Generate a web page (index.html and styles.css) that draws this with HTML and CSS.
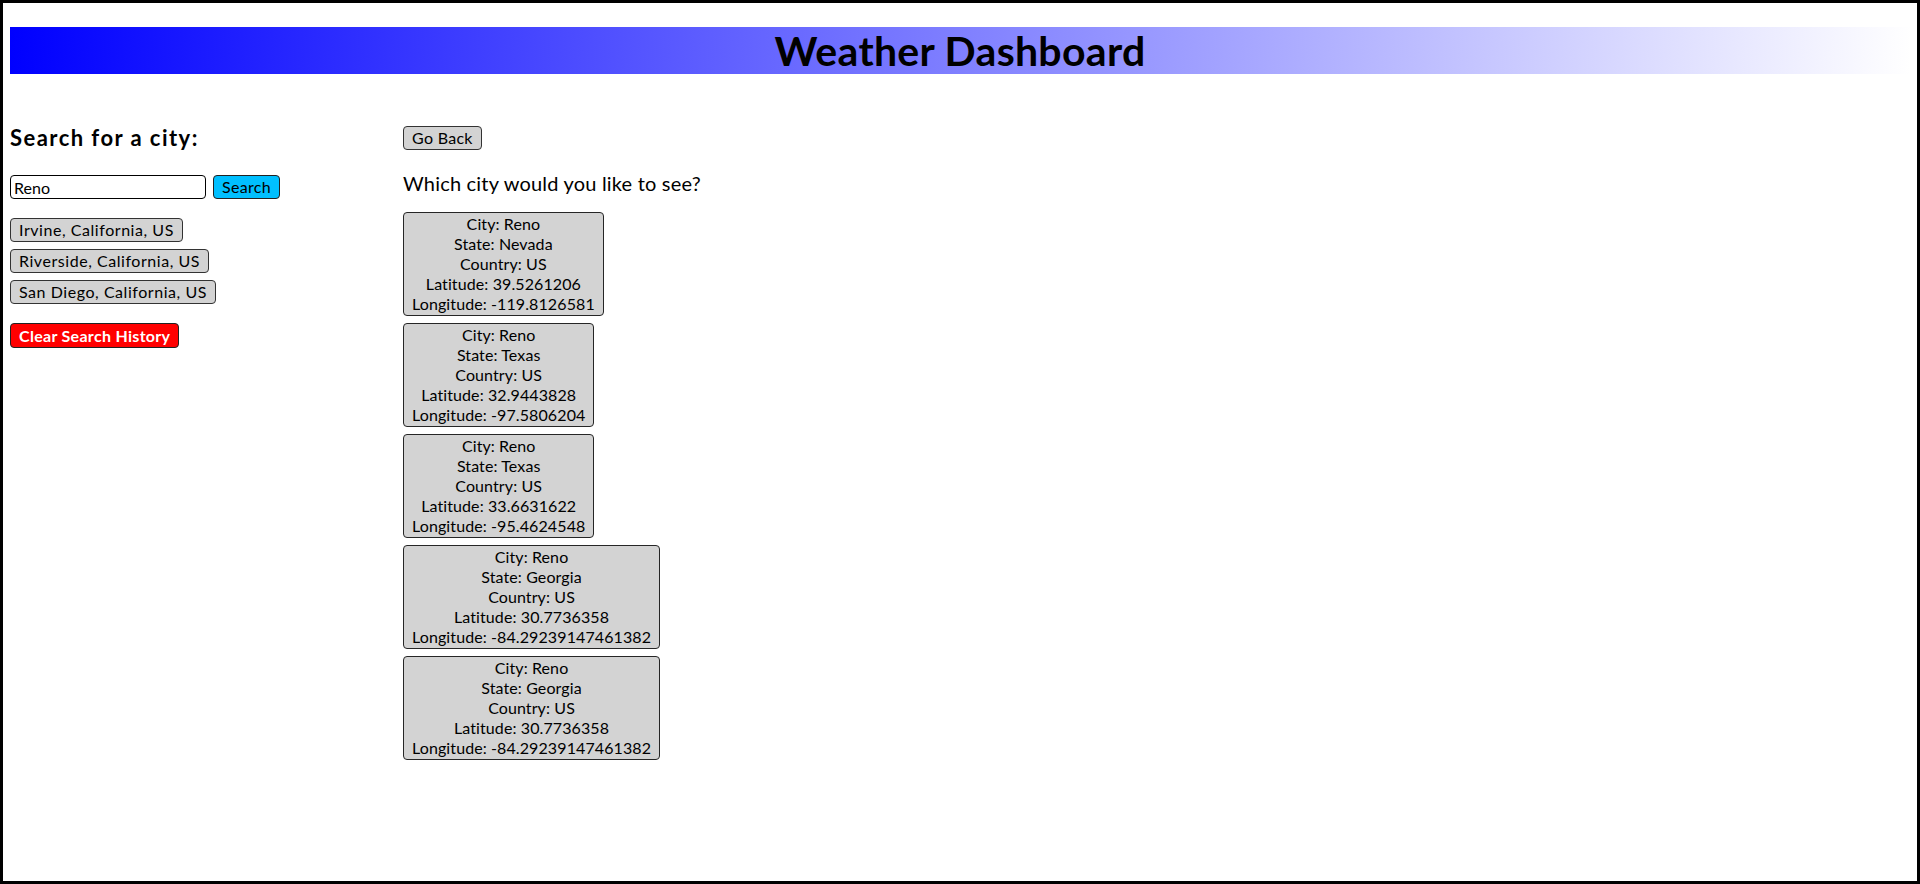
FILE: index.html
```html
<!DOCTYPE html>
<html lang="en">
<head>
<meta charset="utf-8">
<title>Weather Dashboard</title>
<link rel="stylesheet" href="styles.css">
</head>
<body>
<div class="frame">
  <header class="banner">
    <h1 class="banner-title">Weather Dashboard</h1>
  </header>
  <main class="layout">
    <aside class="sidebar">
      <h2 class="sidebar-title">Search for a city:</h2>
      <form class="search" onsubmit="return false">
        <input class="search-input" type="text" value="Reno">
        <button class="btn btn-search" type="button">Search</button>
      </form>
      <div class="history">
        <button class="btn btn-gray btn-history" type="button">Irvine, California, US</button>
        <button class="btn btn-gray btn-history" type="button">Riverside, California, US</button>
        <button class="btn btn-gray btn-history" type="button">San Diego, California, US</button>
      </div>
      <button class="btn btn-clear" type="button">Clear Search History</button>
    </aside>
    <section class="results">
      <button class="btn btn-gray" type="button">Go Back</button>
      <p class="prompt">Which city would you like to see?</p>
      <div class="cards">
        <button class="card" type="button">City: Reno<br>State: Nevada<br>Country: US<br>Latitude: 39.5261206<br>Longitude: -119.8126581</button>
        <button class="card" type="button">City: Reno<br>State: Texas<br>Country: US<br>Latitude: 32.9443828<br>Longitude: -97.5806204</button>
        <button class="card" type="button">City: Reno<br>State: Texas<br>Country: US<br>Latitude: 33.6631622<br>Longitude: -95.4624548</button>
        <button class="card" type="button">City: Reno<br>State: Georgia<br>Country: US<br>Latitude: 30.7736358<br>Longitude: -84.29239147461382</button>
        <button class="card" type="button">City: Reno<br>State: Georgia<br>Country: US<br>Latitude: 30.7736358<br>Longitude: -84.29239147461382</button>
      </div>
    </section>
  </main>
</div>
</body>
</html>
```
FILE: styles.css
```css
* {
  box-sizing: border-box;
}

html, body {
  margin: 0;
  padding: 0;
  background: #ffffff;
}

body {
  font-family: Lato, "Noto Sans", sans-serif;
  color: #000000;
}

.frame {
  height: 884px;
  border: 3px solid #000000;
  padding: 24px 7px 0 7px;
}

.banner {
  height: 47px;
  background: linear-gradient(93deg, #0000ff 0%, #ffffff 100%);
  display: flex;
  align-items: center;
  justify-content: center;
}

.banner-title {
  margin: 0;
  font-size: 41px;
  font-weight: 700;
  line-height: 47px;
  letter-spacing: 0.3px;
  color: #000000;
}

.layout {
  display: flex;
  margin-top: 52px;
}

.sidebar {
  width: 393px;
  flex: none;
  display: flex;
  flex-direction: column;
  align-items: flex-start;
}

.sidebar-title {
  margin: 0;
  font-size: 22px;
  font-weight: 700;
  line-height: 24px;
  letter-spacing: 1.45px;
}

.search {
  display: flex;
  gap: 7px;
  margin: 25px 0 0 0;
}

.search-input {
  width: 196px;
  height: 24px;
  border: 1px solid #000000;
  border-radius: 4px;
  padding: 0 3px;
  font-family: inherit;
  font-size: 16px;
  color: #000000;
  background: #ffffff;
}

.btn {
  font-family: inherit;
  font-size: 16px;
  line-height: 20px;
  letter-spacing: 0.3px;
  height: 24px;
  padding: 1px 8px;
  border: 1px solid #333333;
  border-radius: 4px;
  color: #000000;
  cursor: pointer;
}

.btn-search {
  background: #00bfff;
  border-color: #222222;
}

.btn-gray {
  background: #d3d3d3;
}

.btn-history {
  letter-spacing: 0.55px;
}

.history {
  display: flex;
  flex-direction: column;
  align-items: flex-start;
  gap: 7px;
  margin-top: 19px;
}

.btn-clear {
  margin-top: 19px;
  height: 25px;
  background: #ff0000;
  color: #ffffff;
  font-weight: 700;
  border-color: #222222;
}

.results {
  flex: 1;
  display: flex;
  flex-direction: column;
  align-items: flex-start;
}

.prompt {
  margin: 21px 0 0 0;
  font-size: 20px;
  line-height: 24px;
  letter-spacing: 0.2px;
}

.cards {
  display: flex;
  flex-direction: column;
  align-items: flex-start;
  gap: 7px;
  margin-top: 17px;
}

.card {
  font-family: inherit;
  font-size: 16px;
  line-height: 20px;
  letter-spacing: 0.1px;
  text-align: center;
  padding: 1px 8px;
  border: 1px solid #262626;
  border-radius: 4px;
  background: #d3d3d3;
  color: #000000;
  cursor: pointer;
}
```
